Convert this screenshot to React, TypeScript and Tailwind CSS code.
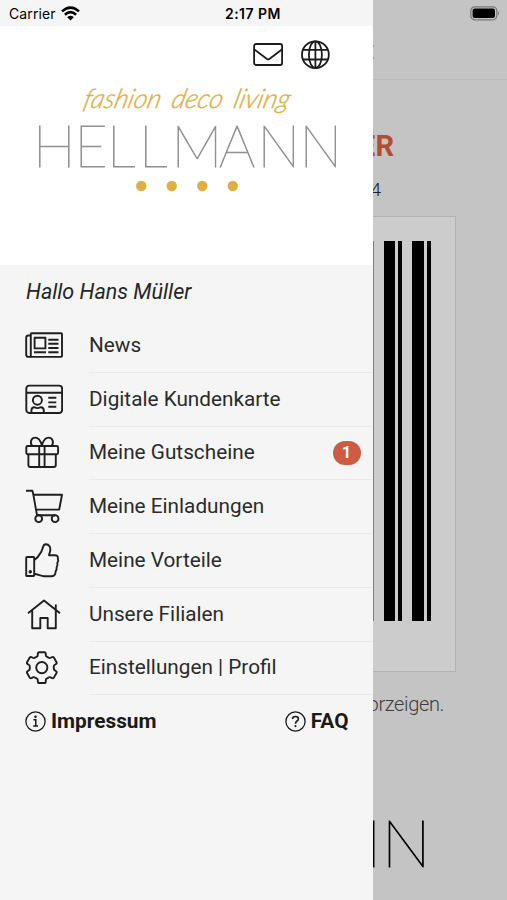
import React from 'react';

interface MenuItem {
  label: string;
  icon: React.ReactNode;
  badge?: number;
}

const MENU_ITEMS: MenuItem[] = [
  {
    label: 'News',
    icon: (
      <>
        <rect x="5.8" y="5.3" width="31.2" height="23.6" rx="0.8" />
        <path d="M5.8 7.5H3.4Q1.2 7.5 1.2 9.6V26.5Q1.2 28.9 3.5 28.9H6.5" />
        <rect x="9.6" y="9.8" width="10.8" height="10.6" />
        <path d="M23.3 11.8H33.5M23.3 15.8H33.5M23.3 20H33.5M23.3 24.2H33.5M9 24.2H21" />
      </>
    ),
  },
  {
    label: 'Digitale Kundenkarte',
    icon: (
      <>
        <rect x="1.3" y="3.6" width="35.8" height="27.4" rx="3" />
        <path d="M1.3 10.7H37M23.3 15.8H31.3M23.3 20.4H31.3M23.3 24.8H31.3" />
        <circle cx="12.4" cy="18.2" r="4.5" />
        <path d="M6.4 31V28.5Q6.4 25.2 9.6 25.2Q12.4 27 15.4 25.2Q18.8 25.2 18.8 28.5V31" />
      </>
    ),
  },
  {
    label: 'Meine Gutscheine',
    badge: 1,
    icon: (
      <>
        <rect x="1.3" y="11" width="31.8" height="8.2" rx="1.5" />
        <path d="M3.4 19.2V30Q3.4 32 5.4 32H28.8Q30.8 32 30.8 30V19.2M14.2 11V32M19.6 11V32" />
        <path d="M7.2 10.8C4.2 7 6.6 2.6 10.3 2.6C14 2.6 15.8 6.6 16.9 10.4C18 6.6 19.8 2.6 23.5 2.6C27.2 2.6 29.6 7 26.6 10.8" />
      </>
    ),
  },
  {
    label: 'Meine Einladungen',
    icon: (
      <>
        <path d="M1 1.7H7.4L8.4 5.8L12 26.2H30M8.4 5.8H37L34.2 20.6H11" />
        <circle cx="13.7" cy="29.7" r="3.4" />
        <circle cx="30.1" cy="29.7" r="3.4" />
      </>
    ),
  },
  {
    label: 'Meine Vorteile',
    icon: (
      <>
        <rect x="1.2" y="14" width="8" height="19" rx="0.8" />
        <circle cx="5.3" cy="28.7" r="0.8" />
        <path d="M9.4 17C13.5 14.5 14.6 11.5 16.5 8.2C18.1 5.5 17.6 1.3 20.7 1.3C24.5 1.3 25.6 4.6 25.3 7.5C25 9.5 24.2 10.5 24 12.2H30C32.2 12.2 33.3 13.7 32.8 15.2C33.5 17.1 33.2 18.6 32.3 19.8C32.8 21.6 32.3 23.3 31.6 24.4C31.9 26.1 31.4 27.4 30.6 28.4C30.6 31.5 29.2 33.2 26.2 33.2H19C15.6 33.2 13 31 9.4 31" />
      </>
    ),
  },
  {
    label: 'Unsere Filialen',
    icon: <path d="M3 16.3L19 3.6L35 16.3M7.2 13.3V31.3H15.3V21H22.7V31.3H30.8V13.3M30.8 12.6V7.6" />,
  },
  {
    label: 'Einstellungen | Profil',
    icon: (
      <g transform="translate(16.8 17.6)">
        <circle r="5.6" />
        <path d="M-5.3-10.8Q-4-11.3-4-12.6V-13.8Q-4-15.4-2.4-15.4H2.4Q4-15.4 4-13.8V-12.6Q4-11.3 5.3-10.8L6.7-10Q7.8-9.1 9-9.8L10-10.4Q11.3-11.2 12.2-9.8L14.6-5.6Q15.4-4.2 14-3.4L13-2.8Q11.8-2.1 12-.8V.8Q11.8 2.1 13 2.8L14 3.4Q15.4 4.2 14.6 5.6L12.2 9.8Q11.3 11.2 10 10.4L9 9.8Q7.8 9.1 6.7 10L5.3 10.8Q4 11.3 4 12.6V13.8Q4 15.4 2.4 15.4H-2.4Q-4 15.4-4 13.8V12.6Q-4 11.3-5.3 10.8L-6.7 10Q-7.8 9.1-9 9.8L-10 10.4Q-11.3 11.2-12.2 9.8L-14.6 5.6Q-15.4 4.2-14 3.4L-13 2.8Q-11.8 2.1-12 .8V-.8Q-11.8-2.1-13-2.8L-14-3.4Q-15.4-4.2-14.6-5.6L-12.2-9.8Q-11.3-11.2-10-10.4L-9-9.8Q-7.8-9.1-6.7-10Z" />
      </g>
    ),
  },
];

const StatusBar = () => (
  <div className="flex h-[26px] items-center bg-[#f5f5f5] pl-[9px] pt-px font-['Inter',sans-serif] text-black">
    <span className="w-[47px] text-[14px] leading-none tracking-[0.1px]">Carrier</span>
    <svg className="ml-[5px] h-[15px] w-[19px]" viewBox="0 0 19 15" fill="none" stroke="#000" strokeWidth="2.6">
      <path d="M1 5.4Q9.5-2.3 18 5.4M3.9 8.7Q9.5 3.6 15.1 8.7" />
      <path d="M6.2 11.2Q9.5 8.4 12.8 11.2L9.5 14.6Z" fill="#000" stroke="none" />
    </svg>
    <span className="ml-[145px] whitespace-nowrap text-[14px] font-semibold leading-none tracking-[0.45px]">2:17 PM</span>
  </div>
);

const Logo = () => (
  <svg className="h-[120px] w-full" viewBox="0 80 372 120">
    <g
      transform="translate(0 107.5) skewX(-14)"
      className="fill-[#e2ae42] stroke-[#e2ae42] font-['Lato',sans-serif] text-[27px] font-light italic"
      strokeWidth="0.4"
    >
      <text x="82" y="0" textLength="77" lengthAdjust="spacingAndGlyphs">fashion</text>
      <text x="170" y="0" textLength="51" lengthAdjust="spacingAndGlyphs">deco</text>
      <text x="232" y="0" textLength="56" lengthAdjust="spacingAndGlyphs">living</text>
    </g>
    <text
      x="32.5 74 106.5 138.5 171 218.5 257 299"
      y="167"
      className="fill-[#929292] stroke-[#929292] font-['Lato',sans-serif] text-[57.5px] font-thin"
      strokeWidth="0.8"
    >
      HELLMANN
    </text>
    <g fill="#e2ae42">
      <circle cx="141" cy="186" r="5.2" />
      <circle cx="171.5" cy="186" r="5.2" />
      <circle cx="202" cy="186" r="5.2" />
      <circle cx="232.5" cy="186" r="5.2" />
    </g>
  </svg>
);

const Drawer = () => (
  <aside className="flex w-[372.5px] shrink-0 flex-col bg-[#f5f5f5]">
    <StatusBar />

    {/* Brand header */}
    <div className="h-[239px] bg-white">
      <div className="flex h-[54px] items-start gap-[18px] pl-[253px] pt-[14px] text-[#1c1c1c]">
        <svg className="h-[30px] w-[30px]" viewBox="0 0 30 30" fill="none" stroke="currentColor" strokeWidth="1.8">
          <rect x="1.1" y="4" width="28" height="21" rx="2" />
          <path d="M1 9.2L14 19Q15.2 19.9 16.4 19L29.2 9.2" />
        </svg>
        <svg className="h-[30px] w-[30px]" viewBox="0 0 30 30" fill="none" stroke="currentColor" strokeWidth="1.8">
          <circle cx="14.4" cy="14.7" r="13.4" />
          <ellipse cx="14.4" cy="14.7" rx="6.5" ry="13.4" />
          <path d="M14.4 1.3V28.1M2 9.9H26.8M2 19.5H26.8" />
        </svg>
      </div>
      <Logo />
    </div>

    <p className="flex h-[54px] items-center pl-[26px] text-[21.5px] italic text-[#262626]">Hallo Hans Müller</p>

    <nav>
      {MENU_ITEMS.map((item) => (
        <a key={item.label} className="flex h-[53.75px] items-center pl-[25px]">
          <svg
            className="h-9 w-[38px] shrink-0"
            viewBox="0 0 38 36"
            fill="none"
            stroke="#1f1f1f"
            strokeWidth="1.9"
            strokeLinejoin="round"
          >
            {item.icon}
          </svg>
          <div className="ml-[26px] flex h-full flex-1 items-center justify-between border-b border-[#e9e9e9] pr-3 text-[20.75px] text-[#2b2b2b]">
            <span className="whitespace-nowrap">{item.label}</span>
            {item.badge && (
              <span className="flex h-6 w-7 items-center justify-center rounded-full bg-[#ce5c45] text-base font-bold text-white">
                {item.badge}
              </span>
            )}
          </div>
        </a>
      ))}
    </nav>

    <div className="flex h-[53px] items-center justify-between pl-[25px] pr-6 text-[20.8px] font-bold text-[#1a1a1a]">
      <a className="flex items-center gap-[5px]">
        <svg className="h-[21px] w-[21px]" viewBox="0 0 21 21" fill="none" stroke="currentColor" strokeWidth="1.3">
          <circle cx="10.5" cy="10.5" r="9.6" />
          <path d="M8.4 8.7H10.8V14.8M8.2 15.1H13" strokeWidth="1.5" />
          <circle cx="10.5" cy="5.7" r="1.3" fill="currentColor" stroke="none" />
        </svg>
        Impressum
      </a>
      <a className="flex items-center gap-[5px]">
        <svg className="h-[21px] w-[21px]" viewBox="0 0 21 21" fill="none" stroke="currentColor" strokeWidth="1.3">
          <circle cx="10.5" cy="10.5" r="9.6" />
          <path d="M7.5 8.1Q7.5 5.5 10.5 5.5Q13.4 5.5 13.4 7.9Q13.4 9.1 12 10Q10.5 11 10.5 12.7" strokeWidth="1.6" />
          <circle cx="10.5" cy="15.1" r="1.1" fill="currentColor" stroke="none" />
        </svg>
        FAQ
      </a>
    </div>
  </aside>
);

// Card page, dimmed while the drawer is open
const DimmedPage = () => (
  <main className="flex min-w-0 flex-1 flex-col overflow-hidden bg-[#c4c4c4]">
    <div className="flex h-[26px] items-center justify-end pr-[7px]">
      <svg className="h-[15px] w-[30px]" viewBox="0 0 30 15">
        <rect x="0.8" y="0.8" width="26" height="13" rx="4" fill="none" stroke="#777" strokeWidth="1.2" />
        <rect x="2.6" y="2.6" width="22.4" height="9.4" rx="2" fill="#000" />
        <path d="M28 5Q30 7.3 28 9.6Z" fill="#777" />
      </svg>
    </div>
    <div className="flex h-[54px] flex-col gap-[10px] border-b border-[#b9b9b9] pt-[19px]">
      <div className="h-[2px] w-px bg-[#a0a0a0]" />
      <div className="h-[2px] w-px bg-[#a0a0a0]" />
    </div>

    <div className="flex h-[136px] flex-col items-end">
      <span className="mr-[113px] mt-[46px] text-[29px] font-bold leading-10 text-[#b54a35]">ER</span>
      <span className="mr-[126px] mt-[12px] text-[19px] font-light leading-6 text-[#222]">4</span>
    </div>

    <div className="mr-[51px] h-[456px] border-y-[1.5px] border-r-[1.5px] border-[#b2b2b2] bg-[#cccccc] pt-[24px]">
      <div className="flex h-[380px]">
        <div className="w-[1.5px] bg-[#808080]" />
        <div className="ml-[10px] w-[11px] bg-black" />
        <div className="ml-[3px] w-[4px] bg-black" />
        <div className="ml-[10px] w-[11.5px] bg-black" />
        <div className="ml-[3px] w-[4px] bg-black" />
      </div>
    </div>

    <div className="flex h-[64px] items-center justify-end pr-[63px] text-[20px] font-light tracking-[-0.35px] text-[#3c3c3c]">
      <span>orzeigen.</span>
    </div>
    <div className="flex h-[164px] items-start justify-end pr-[76px] pt-[73px] font-['Lato',sans-serif] text-[66px] font-thin leading-none text-black [-webkit-text-stroke:1px_black]">
      <span>NN</span>
    </div>
  </main>
);

const App = () => {
  return (
    <div className="flex h-[900px] w-[507px] overflow-hidden font-['Roboto',sans-serif]">
      <Drawer />
      <DimmedPage />
    </div>
  );
};

export default App;
